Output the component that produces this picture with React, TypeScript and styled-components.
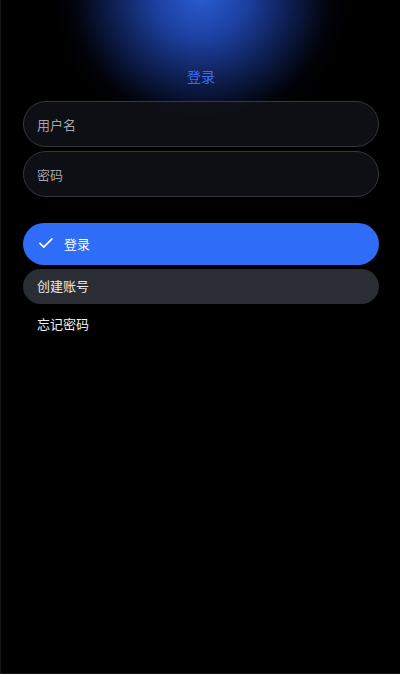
import styled, { createGlobalStyle } from 'styled-components';

const GlobalStyle = createGlobalStyle`
  html, body {
    margin: 0;
    padding: 0;
    background: #000;
  }
  body {
    font-family: 'Noto Sans CJK SC', 'Noto Sans', sans-serif;
  }
`;

const Screen = styled.div`
  position: relative;
  box-sizing: border-box;
  width: 400px;
  height: 674px;
  background: #000;
  border-left: 1px solid #161616;
  border-bottom: 1px solid #161616;
  overflow: hidden;
`;

// soft blue light at the top edge
const Glow = styled.div`
  position: absolute;
  left: 50px;
  top: -150px;
  width: 300px;
  height: 290px;
  background: radial-gradient(
    ellipse closest-side at 50% 50%,
    rgba(42, 92, 210, 1) 0%,
    rgba(34, 76, 190, 0.85) 30%,
    rgba(24, 54, 145, 0.5) 62%,
    rgba(10, 22, 64, 0.15) 86%,
    rgba(0, 0, 0, 0) 100%
  );
  pointer-events: none;
`;

const Content = styled.div`
  position: relative;
  display: flex;
  flex-direction: column;
  padding: 66px 21px 0 22px;
`;

const Title = styled.h1`
  margin: 0 0 15px;
  text-align: center;
  font-size: 14px;
  font-weight: 400;
  line-height: 20px;
  color: #3d6cf0;
`;

const Fields = styled.div`
  display: flex;
  flex-direction: column;
  gap: 4px;
  margin-bottom: 26px;
`;

const Field = styled.input`
  box-sizing: border-box;
  height: 46px;
  width: 100%;
  padding: 0 13px;
  border: 1px solid #34373d;
  border-radius: 23px;
  background: rgba(16, 18, 23, 0.85);
  color: #e0e0e0;
  font-family: inherit;
  font-size: 13px;
  outline: none;
  &::placeholder {
    color: #a2a5ab;
  }
`;

const Actions = styled.div`
  display: flex;
  flex-direction: column;
  gap: 4px;
`;

const Button = styled.button<{ $primary?: boolean }>`
  box-sizing: border-box;
  display: flex;
  align-items: center;
  gap: 9px;
  width: 100%;
  height: ${(p) => (p.$primary ? '42px' : '35px')};
  padding: 0 14px 2px;
  border: none;
  border-radius: 21px;
  background: ${(p) => (p.$primary ? '#2f6cf7' : '#2a2d33')};
  color: ${(p) => (p.$primary ? '#fff' : '#e8e8e8')};
  font-family: inherit;
  font-size: 13px;
  text-align: left;
`;

const LinkText = styled.div`
  padding: 10px 14px;
  font-size: 13px;
  color: #f0f0f0;
`;

const Check = () => (
  <svg width="18" height="18" viewBox="0 0 24 24" fill="none" stroke="#fff" strokeWidth="2.2" strokeLinecap="round" strokeLinejoin="round">
    <path d="M4 12.5l5 5L20 6.5" />
  </svg>
);

const App = () => (
  <Screen>
    <GlobalStyle />
    <Glow />
    <Content>
      <Title>登录</Title>
      <Fields>
        <Field placeholder="用户名" />
        <Field type="password" placeholder="密码" />
      </Fields>
      <Actions>
        <Button $primary>
          <Check />
          登录
        </Button>
        <Button>创建账号</Button>
      </Actions>
      <LinkText>忘记密码</LinkText>
    </Content>
  </Screen>
);

export default App;
